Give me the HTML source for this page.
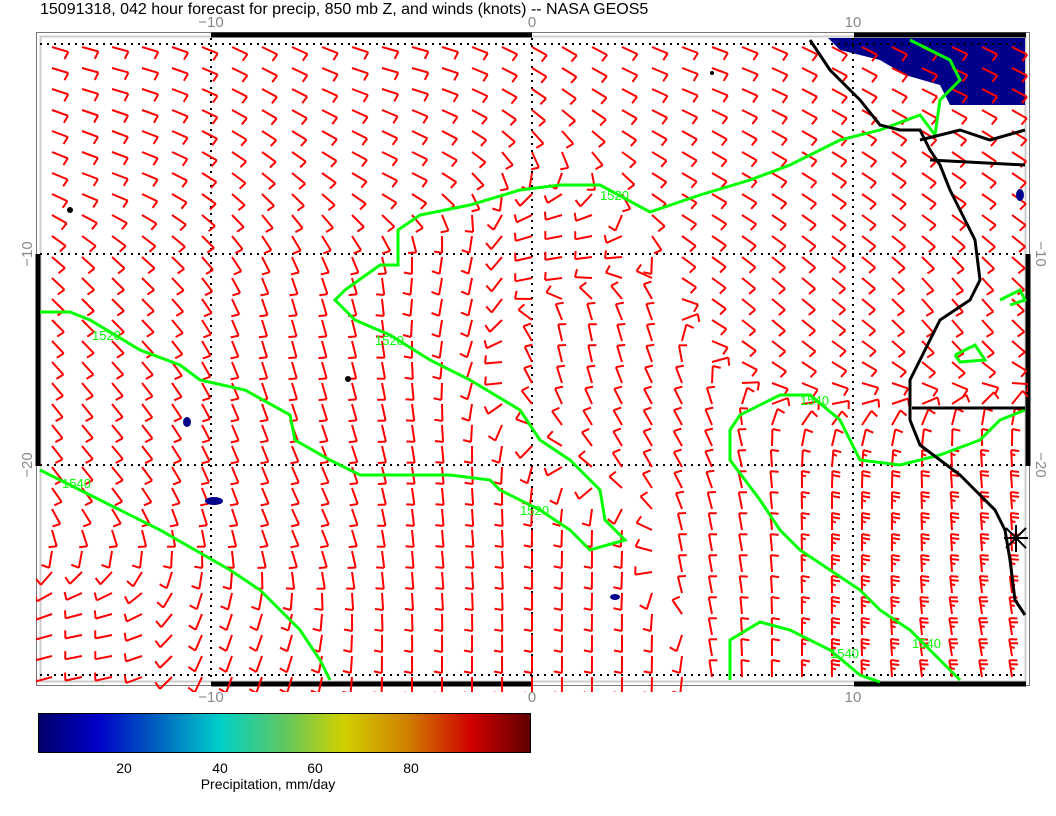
<!DOCTYPE html>
<html><head><meta charset="utf-8"><style>
html,body{margin:0;padding:0;background:#fff;width:1056px;height:816px;overflow:hidden}
svg{position:absolute;left:0;top:0}
text{font-family:"Liberation Sans",sans-serif}
</style></head><body>
<svg id="s" width="1056" height="816" xmlns="http://www.w3.org/2000/svg">
<defs><linearGradient id="cb" x1="0" x2="1" y1="0" y2="0">
<stop offset="0" stop-color="#00006a"/><stop offset="0.12" stop-color="#0000c8"/><stop offset="0.22" stop-color="#0050c0"/><stop offset="0.37" stop-color="#00d0c8"/><stop offset="0.5" stop-color="#60c860"/><stop offset="0.62" stop-color="#d0d000"/><stop offset="0.75" stop-color="#d08000"/><stop offset="0.88" stop-color="#d00000"/><stop offset="1" stop-color="#600000"/></linearGradient>
<clipPath id="cp"><rect x="36" y="36" width="992" height="656"/></clipPath></defs>
<text x="40" y="14" font-size="16" fill="#000">15091318, 042 hour forecast for precip, 850 mb Z, and winds (knots) -- NASA GEOS5</text>
<g font-size="15" fill="#888" text-anchor="middle">
<text x="211" y="27">−10</text><text x="532" y="27">0</text><text x="853" y="27">10</text>
<text x="211" y="702">−10</text><text x="532" y="702">0</text><text x="853" y="702">10</text>
<text transform="translate(32,254) rotate(-90)">−10</text><text transform="translate(32,465) rotate(-90)">−20</text>
<text transform="translate(1036,254) rotate(90)">−10</text><text transform="translate(1036,465) rotate(90)">−20</text>
</g>
<rect x="36.5" y="32.5" width="993" height="653" fill="none" stroke="#777" stroke-width="1"/>
<rect x="40.5" y="36.5" width="985" height="645" fill="none" stroke="#ccc" stroke-width="2"/>
<path d="M828 38 L1025 38 L1025 105 L950 105 L940 85 L905 75 L880 60 L860 55 L840 50Z" fill="#00008a"/>
<g stroke="#000" stroke-width="5"><line x1="211" y1="35" x2="532" y2="35"/><line x1="854" y1="35" x2="1026" y2="35"/>
<line x1="211" y1="684" x2="532" y2="684"/><line x1="854" y1="684" x2="1026" y2="684"/>
<line x1="38" y1="254" x2="38" y2="466"/><line x1="1028" y1="254" x2="1028" y2="466"/></g>
<g stroke="#000" stroke-width="2" stroke-dasharray="2,5" fill="none">
<line x1="40" y1="44" x2="1026" y2="44"/><line x1="40" y1="254" x2="1026" y2="254"/><line x1="40" y1="465" x2="1026" y2="465"/><line x1="40" y1="675" x2="1026" y2="675"/>
<line x1="211" y1="38" x2="211" y2="682"/><line x1="532" y1="38" x2="532" y2="682"/><line x1="853" y1="38" x2="853" y2="682"/></g>
<g id="barbs" stroke="#f00" stroke-width="2" fill="none" clip-path="url(#cp)"></g>
<g stroke="#0f0" stroke-width="3" fill="none">
<polyline points="910,40 950,60 960,80 940,100 935,135 920,115 880,130 840,140 790,165 750,180 700,195 650,212 600,185 560,185 520,190 470,205 420,215 398,230 398,265 380,265 345,290 335,300 355,320 390,335 430,360 470,380 520,410 540,440 570,460 600,490 605,520 625,540 590,550 570,530 540,510 500,490 490,480 450,475 360,475 330,460 295,440 290,415 245,390 200,380 180,365 140,350 90,320 70,312 40,312"/>
<polyline points="40,470 100,500 160,530 230,570 260,590 300,630 320,660 330,680"/>
<polyline points="730,680 730,640 760,622 790,630 830,650 860,675 880,682"/>
<polyline points="960,680 940,660 910,630 880,610 860,590 830,570 800,550 780,530 760,500 730,460 730,430 740,415 780,395 810,395 840,420 860,460 900,465 940,455 980,440 1000,420 1025,410"/>
<polyline points="1000,300 1020,290 1025,300 1010,305"/><polyline points="955,355 975,345 985,360 960,362 955,355"/>
</g>
<g font-size="13" fill="#0f0"><text x="600" y="200">1520</text><text x="375" y="345">1520</text><text x="92" y="340">1520</text><text x="62" y="488">1540</text><text x="520" y="515">1520</text><text x="800" y="405">1540</text><text x="830" y="658">1540</text><text x="912" y="648">1540</text></g>
<g stroke="#000" stroke-width="3" fill="none">
<polyline points="810,40 830,70 860,100 880,125 900,130 920,130 930,150 940,165 950,190 960,210 975,240 980,280 970,300 940,320 930,340 910,380 910,420 920,445 940,460 960,475 975,490 995,510 1005,530 1010,560 1015,600 1025,615"/>
<line x1="930" y1="160" x2="1025" y2="165"/><line x1="912" y1="408" x2="1025" y2="408"/>
<polyline points="920,140 960,130 990,140 1025,130"/>
</g>
<g fill="#000"><circle cx="70" cy="210" r="3"/><circle cx="348" cy="379" r="3"/><circle cx="712" cy="73" r="2"/></g>
<g fill="#00008a"><ellipse cx="214" cy="501" rx="9" ry="4"/><ellipse cx="187" cy="422" rx="4" ry="5"/><ellipse cx="615" cy="597" rx="5" ry="3"/><ellipse cx="1020" cy="195" rx="4" ry="6"/></g>
<g stroke="#000" stroke-width="2"><line x1="1016" y1="525" x2="1016" y2="552"/><line x1="1004" y1="538" x2="1028" y2="538"/><line x1="1006" y1="528" x2="1026" y2="548"/><line x1="1026" y1="528" x2="1006" y2="548"/></g>
<rect x="38.5" y="713.5" width="492" height="39" fill="url(#cb)" stroke="#000"/>
<g font-size="14" fill="#000" text-anchor="middle"><text x="124" y="773">20</text><text x="220" y="773">40</text><text x="315" y="773">60</text><text x="411" y="773">80</text>
<text x="268" y="789">Precipitation, mm/day</text></g>
</svg>
<script>
var A=[[100,60,15],[400,60,15],[700,60,20],[950,60,25],
[100,160,20],[400,160,25],[700,160,30],[950,180,35],
[100,300,45],[300,330,75],[450,280,100],[560,260,170],[580,340,-100],[650,450,-120],[780,300,40],[950,300,50],
[100,450,50],[300,500,65],[450,550,85],[600,550,90],[700,560,-100],[850,550,-90],[980,500,-95],
[100,650,170],[250,650,110],[450,650,90],[620,640,90],[800,650,-90],[980,650,-100]];
function sm(t){t=Math.max(0,Math.min(1,t));return t*t*(3-2*t);}
var g=document.getElementById('barbs'),out='';
for(var r=0;r<31;r++){for(var c=0;c<33;c++){
 var x=52+c*30,y=47+r*21,sx=0,sy=0;
 for(var i=0;i<A.length;i++){var d=Math.hypot(x-A[i][0],y-A[i][1])+20;var w=1/(d*d*d);
  var ra=A[i][2]*Math.PI/180;sx+=w*Math.cos(ra);sy+=w*Math.sin(ra);}
 var rad=Math.atan2(sy,sx),L=17,dx=Math.cos(rad),dy=Math.sin(rad);
 var n=1+1.6*sm((x-760)/100)*sm((y-420)/120);
 var ex=x+dx*L,ey=y+dy*L;
 out+='<line x1="'+x.toFixed(1)+'" y1="'+y.toFixed(1)+'" x2="'+ex.toFixed(1)+'" y2="'+ey.toFixed(1)+'"/>';
 var px=-dy,py=dx,k=0;
 while(n>0.25){var l=n>=0.75?8:4;var bx=ex-dx*k*4,by=ey-dy*k*4;
  out+='<line x1="'+bx.toFixed(1)+'" y1="'+by.toFixed(1)+'" x2="'+(bx+px*l-dx*1.5).toFixed(1)+'" y2="'+(by+py*l-dy*1.5).toFixed(1)+'"/>';
  n-=1;k++;}
}}
g.innerHTML=out;
</script>
</body></html>
